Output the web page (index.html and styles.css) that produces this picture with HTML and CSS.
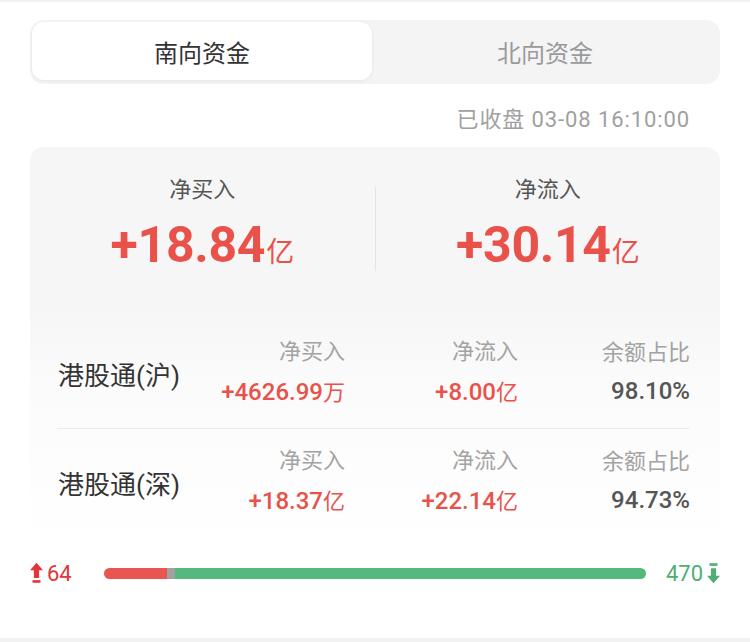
FILE: index.html
```html
<!DOCTYPE html>
<html lang="zh">
<head>
<meta charset="utf-8">
<link rel="stylesheet" href="styles.css">
</head>
<body>
<div class="page">
  <div class="tabs">
    <div class="tab active">南向资金</div>
    <div class="tab">北向资金</div>
  </div>
  <div class="time">已收盘 03-08 16:10:00</div>
  <div class="card">
    <div class="summary">
      <div class="sum-col">
        <div class="sum-label">净买入</div>
        <div class="sum-value">+18.84<span class="unit">亿</span></div>
      </div>
      <div class="vdiv"></div>
      <div class="sum-col">
        <div class="sum-label">净流入</div>
        <div class="sum-value">+30.14<span class="unit">亿</span></div>
      </div>
    </div>
    <div class="rows">
      <div class="row">
        <div class="name">港股通(沪)</div>
        <div class="cell"><div class="h">净买入</div><div class="v red">+4626.99<span class="u">万</span></div></div>
        <div class="cell"><div class="h">净流入</div><div class="v red">+8.00<span class="u">亿</span></div></div>
        <div class="cell"><div class="h">余额占比</div><div class="v gray">98.10%</div></div>
      </div>
      <div class="row">
        <div class="name">港股通(深)</div>
        <div class="cell"><div class="h">净买入</div><div class="v red">+18.37<span class="u">亿</span></div></div>
        <div class="cell"><div class="h">净流入</div><div class="v red">+22.14<span class="u">亿</span></div></div>
        <div class="cell"><div class="h">余额占比</div><div class="v gray">94.73%</div></div>
      </div>
    </div>
  </div>
  <div class="ratio">
    <div class="side up">
      <svg class="arrow" viewBox="0 0 12 20" width="13" height="22"><polygon points="6,0.5 12,7.5 8.4,7.5 8.4,14.5 3.6,14.5 3.6,7.5 0,7.5" fill="#e0363a"/><rect x="2.3" y="16.6" width="7.4" height="2.4" fill="#e0363a"/></svg>
      <span>64</span>
    </div>
    <div class="bar">
      <div class="seg seg-red" style="width:11.6%"></div>
      <div class="seg seg-gray" style="width:1.5%"></div>
      <div class="seg seg-green" style="width:86.9%"></div>
    </div>
    <div class="side down">
      <span>470</span>
      <svg class="arrow" viewBox="0 0 12 20" width="13" height="22"><rect x="2.3" y="1" width="7.4" height="2.4" fill="#4fae74"/><polygon points="6,19.5 12,12.5 8.4,12.5 8.4,5.5 3.6,5.5 3.6,12.5 0,12.5" fill="#4fae74"/></svg>
    </div>
  </div>
</div>
<div class="footer"></div>
</body>
</html>
```
FILE: styles.css
```css
html, body {
  margin: 0;
  padding: 0;
  background: #ffffff;
}
body {
  width: 750px;
  border-top: 2px solid #f1f1f1;
  font-family: Roboto, "Noto Sans CJK SC", sans-serif;
  color: #333;
}
.page {
  box-sizing: border-box;
  height: 636px;
  padding: 18px 30px 0;
}
.footer {
  height: 4px;
  background: #f2f2f2;
}
.tabs {
  display: flex;
  height: 64px;
  box-sizing: border-box;
  padding: 2px 2px 4px;
  background: #f4f4f4;
  border-radius: 14px;
}
.tab {
  flex: 1;
  display: flex;
  align-items: center;
  justify-content: center;
  font-size: 24px;
  color: #9a9a9a;
  font-family: "Noto Sans CJK SC", sans-serif;
}
.tab.active {
  flex: 0 0 340px;
  background: #fff;
  color: #333;
  border-radius: 12px;
  box-shadow: 0 1px 4px rgba(0,0,0,0.06);
}
.time {
  margin-top: 21px;
  line-height: 30px;
  font-size: 22px;
  letter-spacing: 0.9px;
  color: #a0a0a0;
  text-align: right;
  padding-right: 30px;
}
.card {
  margin-top: 12px;
  border-radius: 14px;
  background: linear-gradient(to bottom, #f6f6f6 0%, #f6f6f6 40%, #fbfbfb 60%, #ffffff 100%);
  padding: 28px 0 27px 0;
}
.summary {
  display: flex;
  align-items: flex-start;
}
.sum-col {
  flex: 1;
  text-align: center;
}
.sum-label {
  font-size: 22px;
  line-height: 30px;
  color: #555;
}
.sum-value {
  margin-top: 12px;
  line-height: 56px;
  font-size: 50px;
  font-weight: 700;
  color: #e9524b;
  letter-spacing: -0.3px;
}
.unit {
  font-size: 28px;
  font-weight: 400;
  margin-left: 1px;
  font-family: "Noto Sans CJK SC", sans-serif;
}
.vdiv {
  width: 1px;
  height: 84px;
  margin-top: 12px;
  background: #e4e4e4;
}
.rows {
  margin-top: 59px;
  padding: 0 30px 0 27px;
}
.row {
  display: grid;
  grid-template-columns: 115px 173px 173px 172px;
  align-items: center;
  padding-bottom: 19px;
}
.row + .row {
  border-top: 1px solid #ececec;
  padding-top: 17px;
  padding-bottom: 0;
}
.name {
  font-size: 26px;
  color: #333;
  padding-left: 1px;
  white-space: nowrap;
}
.cell {
  text-align: right;
}
.h {
  font-size: 22px;
  line-height: 30px;
  color: #a3a3a3;
}
.v {
  margin-top: 6px;
  font-size: 24px;
  line-height: 34px;
  font-weight: 500;
}
.v .u {
  font-size: 22px;
  font-weight: 400;
  font-family: "Noto Sans CJK SC", sans-serif;
}
.red { color: #e9524b; }
.gray { color: #555; }
.ratio {
  margin-top: 13px;
  display: flex;
  align-items: center;
  height: 30px;
}
.side {
  display: flex;
  align-items: center;
  font-size: 22px;
  gap: 4px;
}
.side.up { color: #e0363a; width: 42px; }
.side.down { color: #4fae74; }
.bar {
  flex: 1;
  display: flex;
  height: 11px;
  border-radius: 6px;
  overflow: hidden;
  margin: 0 20px 0 32px;
}
.seg { height: 100%; }
.seg-red { background: #ea5550; }
.seg-gray { background: #a0a0a0; }
.seg-green { background: #55b87e; }
```
